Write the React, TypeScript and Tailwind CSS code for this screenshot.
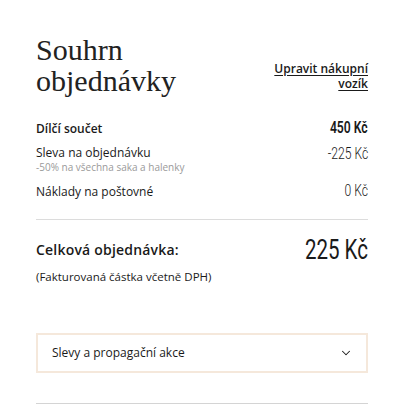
import { ChevronDown } from 'lucide-react';

const sans = { fontFamily: '"Open Sans", "Liberation Sans", sans-serif' };
const price = { fontFamily: 'Roboto, "Liberation Sans", sans-serif' };

// condensed price figure: Roboto squeezed horizontally, anchored at the right edge
const Price = ({ children, className }: { children: React.ReactNode; className: string }) => (
	<span className={`inline-block origin-right scale-x-[0.76] whitespace-nowrap ${className}`} style={price}>
		{children}
	</span>
);

const App = () => {
	return (
		<div className="w-[406px] h-[404px] bg-white overflow-hidden pl-9 pr-[38px] pt-[34px] text-[#1a1a1a]" style={sans}>
			{/* Header */}
			<div className="flex items-start justify-between">
				<h1 className="text-[30px] leading-[31px] text-[#222]" style={{ fontFamily: '"Liberation Serif", serif' }}>
					Souhrn
					<br />
					objednávky
				</h1>
				<a href="#" className="mt-[27px] w-[98px] text-right text-[12px] leading-[15px] font-semibold underline underline-offset-2">
					Upravit nákupní vozík
				</a>
			</div>

			{/* Rows */}
			<div className="mt-[20px] flex flex-col gap-[5px] pb-[16px] border-b border-[#dcdcdc]">
				<div className="flex justify-between items-baseline">
					<span className="text-[12px] font-semibold">Dílčí součet</span>
					<Price className="text-[16px] font-semibold">450 Kč</Price>
				</div>
				<div className="flex justify-between items-start">
					<div className="flex flex-col">
						<span className="text-[12px] leading-[16px]">Sleva na objednávku</span>
						<span className="text-[10px] leading-[12px] text-[#9a9a9a]">-50% na všechna saka a halenky</span>
					</div>
					<Price className="text-[16px] leading-[18px] font-light">-225 Kč</Price>
				</div>
				<div className="flex justify-between items-baseline mt-[1px]">
					<span className="text-[12px]">Náklady na poštovné</span>
					<Price className="text-[16px] font-light">0 Kč</Price>
				</div>
			</div>

			{/* Total */}
			<div className="pt-[16px]">
				<div className="flex justify-between items-center">
					<span className="text-[14px] leading-[28px] font-semibold tracking-[0.2px]">Celková objednávka:</span>
					<Price className="text-[27px] leading-[28px]">225 Kč</Price>
				</div>
				<p className="mt-[5px] text-[11.5px] leading-[16px]">(Fakturovaná částka včetně DPH)</p>
			</div>

			{/* Promo dropdown */}
			<button className="mt-[48px] w-full h-[40px] border-2 border-[#f5e8db] flex items-center justify-between pl-[14px] pr-[13px] text-[12px]">
				<span>Slevy a propagační akce</span>
				<ChevronDown size={14} strokeWidth={1.75} />
			</button>

			<div className="mt-[30px] border-t border-[#d4d4d4]" />
		</div>
	);
};

export default App;
